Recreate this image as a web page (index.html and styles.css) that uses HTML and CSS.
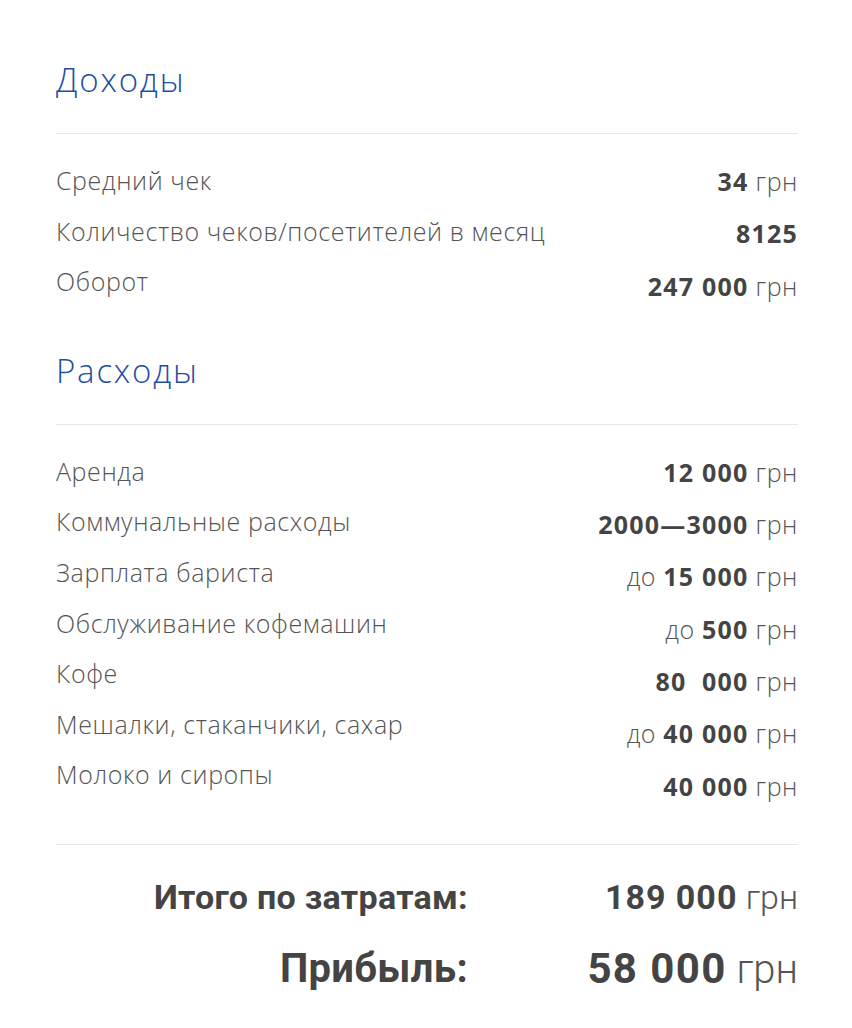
FILE: index.html
```html
<!DOCTYPE html>
<html lang="ru">
<head>
<meta charset="utf-8">
<link rel="stylesheet" href="styles.css">
</head>
<body>
<main class="calc">
  <section class="block">
    <h2 class="block-title">Доходы</h2>
    <div class="table">
      <ul class="labels">
        <li>Средний чек</li>
        <li>Количество чеков/посетителей в месяц</li>
        <li>Оборот</li>
      </ul>
      <ul class="values">
        <li><b>34</b> грн</li>
        <li><b>8125</b></li>
        <li><b>247 000</b> грн</li>
      </ul>
    </div>
  </section>
  <section class="block block-exp">
    <h2 class="block-title">Расходы</h2>
    <div class="table">
      <ul class="labels">
        <li>Аренда</li>
        <li>Коммунальные расходы</li>
        <li>Зарплата бариста</li>
        <li>Обслуживание кофемашин</li>
        <li>Кофе</li>
        <li>Мешалки, стаканчики, сахар</li>
        <li>Молоко и сиропы</li>
      </ul>
      <ul class="values">
        <li><b>12 000</b> грн</li>
        <li><b>2000—3000</b> грн</li>
        <li>до <b>15 000</b> грн</li>
        <li>до <b>500</b> грн</li>
        <li><b>80&nbsp; 000</b> грн</li>
        <li>до <b>40 000</b> грн</li>
        <li><b>40 000</b> грн</li>
      </ul>
    </div>
  </section>
  <section class="totals">
    <div class="total-row total-sum">
      <span class="total-label">Итого по затратам:</span>
      <span class="total-value"><b>189 000</b> грн</span>
    </div>
    <div class="total-row total-profit">
      <span class="total-label">Прибыль:</span>
      <span class="total-value"><b>58 000</b> грн</span>
    </div>
  </section>
</main>
</body>
</html>
```

FILE: styles.css
```css
html, body {
  margin: 0;
  padding: 0;
  background: #fff;
}
body {
  font-family: "Open Sans", "Noto Sans", sans-serif;
  color: #555;
}
.calc {
  width: 742px;
  margin: 0 0 0 56px;
  padding-top: 56px;
}
.block-title {
  margin: 0;
  font-weight: 300;
  font-size: 33px;
  letter-spacing: 1.8px;
  line-height: 48px;
  color: #1f4ea3;
  padding-bottom: 29px;
  border-bottom: 1px solid #e6e6e6;
}
.block-exp {
  margin-top: 35px;
}
.table {
  display: flex;
  justify-content: space-between;
  padding-top: 21px;
}
.labels, .values {
  list-style: none;
  margin: 0;
  padding: 0;
}
.labels li {
  font-size: 25px;
  font-weight: 300;
  letter-spacing: 0.6px;
  line-height: 50.6px;
  color: #555;
  white-space: nowrap;
}
.values {
  text-align: right;
}
.values li {
  font-size: 25px;
  font-weight: 300;
  letter-spacing: 0.6px;
  line-height: 52.3px;
  color: #555;
  white-space: nowrap;
}
.values b {
  font-weight: 700;
  letter-spacing: 1.2px;
  color: #444;
}
.totals {
  margin-top: 32px;
  border-top: 1px solid #e6e6e6;
  padding-top: 22px;
  font-family: "Roboto", sans-serif;
}
.total-row {
  display: grid;
  grid-template-columns: 412px 1fr;
  align-items: center;
  color: #444;
}
.total-label {
  text-align: right;
  font-weight: 700;
  letter-spacing: 0.3px;
}
.total-value {
  text-align: right;
  font-weight: 300;
  color: #555;
}
.total-value b {
  font-weight: 700;
  color: #444;
  letter-spacing: 1px;
}
.total-sum {
  font-size: 34px;
  line-height: 60px;
}
.total-profit {
  font-size: 40px;
  line-height: 84px;
}
.total-profit .total-value b {
  font-size: 42px;
  letter-spacing: 1.4px;
}
```
